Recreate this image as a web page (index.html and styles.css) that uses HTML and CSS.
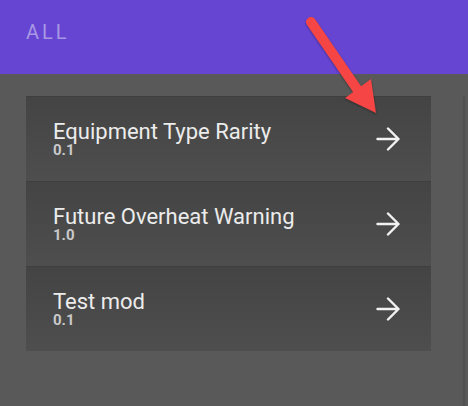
FILE: index.html
```html
<!DOCTYPE html>
<html>
<head>
<meta charset="utf-8">
<link rel="stylesheet" href="styles.css">
</head>
<body>
<header class="topbar">
  <span class="tab">ALL</span>
</header>
<main class="content">
  <div class="list">
    <div class="row">
      <div class="text">
        <div class="title">Equipment Type Rarity</div>
        <div class="version">0.1</div>
      </div>
      <svg class="go" width="24" height="24" viewBox="0 0 24 24"><path d="M1.5 12H22.5M12 1.5L22.5 12L12 22.5" /></svg>
    </div>
    <div class="row">
      <div class="text">
        <div class="title">Future Overheat Warning</div>
        <div class="version">1.0</div>
      </div>
      <svg class="go" width="24" height="24" viewBox="0 0 24 24"><path d="M1.5 12H22.5M12 1.5L22.5 12L12 22.5" /></svg>
    </div>
    <div class="row">
      <div class="text">
        <div class="title">Test mod</div>
        <div class="version">0.1</div>
      </div>
      <svg class="go" width="24" height="24" viewBox="0 0 24 24"><path d="M1.5 12H22.5M12 1.5L22.5 12L12 22.5" /></svg>
    </div>
  </div>
  <div class="spacer"></div>
  <div class="track"></div>
</main>
<svg class="callout" width="468" height="406" viewBox="0 0 468 406">
  <line x1="311" y1="22" x2="357" y2="89" />
  <polygon points="345,98 371,79 376,113" />
</svg>
</body>
</html>
```
FILE: styles.css
```css
html, body {
  margin: 0;
  padding: 0;
}
body {
  width: 468px;
  height: 406px;
  overflow: hidden;
  background: #595959;
  font-family: Roboto, "Liberation Sans", sans-serif;
  display: flex;
  flex-direction: column;
}
.topbar {
  height: 74px;
  box-sizing: border-box;
  background: #6745d3;
  padding: 22px 0 0 26px;
}
.tab {
  display: block;
  font-size: 20px;
  line-height: 20px;
  letter-spacing: 3px;
  color: #a898e4;
}
.content {
  flex: 1;
  display: flex;
  padding: 22px 3px 0 26px;
}
.list {
  width: 405px;
  align-self: flex-start;
}
.row {
  height: 85px;
  box-sizing: border-box;
  border-top: 1px solid #3f3f3f;
  background: linear-gradient(#444444, #4e4e4e);
  display: flex;
  align-items: center;
  padding: 0 31px 0 27px;
}
.text {
  flex: 1;
}
.title {
  font-size: 22px;
  line-height: 22px;
  color: #ececec;
}
.version {
  font-size: 15px;
  line-height: 15px;
  font-weight: bold;
  color: #c9c9c9;
}
.go {
  fill: none;
  stroke: #f2f2f2;
  stroke-width: 2.4;
  stroke-linecap: round;
  stroke-linejoin: round;
}
.spacer {
  flex: 1;
}
.track {
  width: 2px;
  background: #525050;
}
.callout {
  position: absolute;
  left: 0;
  top: 0;
  pointer-events: none;
  filter: drop-shadow(0 1px 1px rgba(0,0,0,0.35));
}
.callout line {
  stroke: #f64545;
  stroke-width: 10;
  stroke-linecap: round;
}
.callout polygon {
  fill: #f64545;
}
```
